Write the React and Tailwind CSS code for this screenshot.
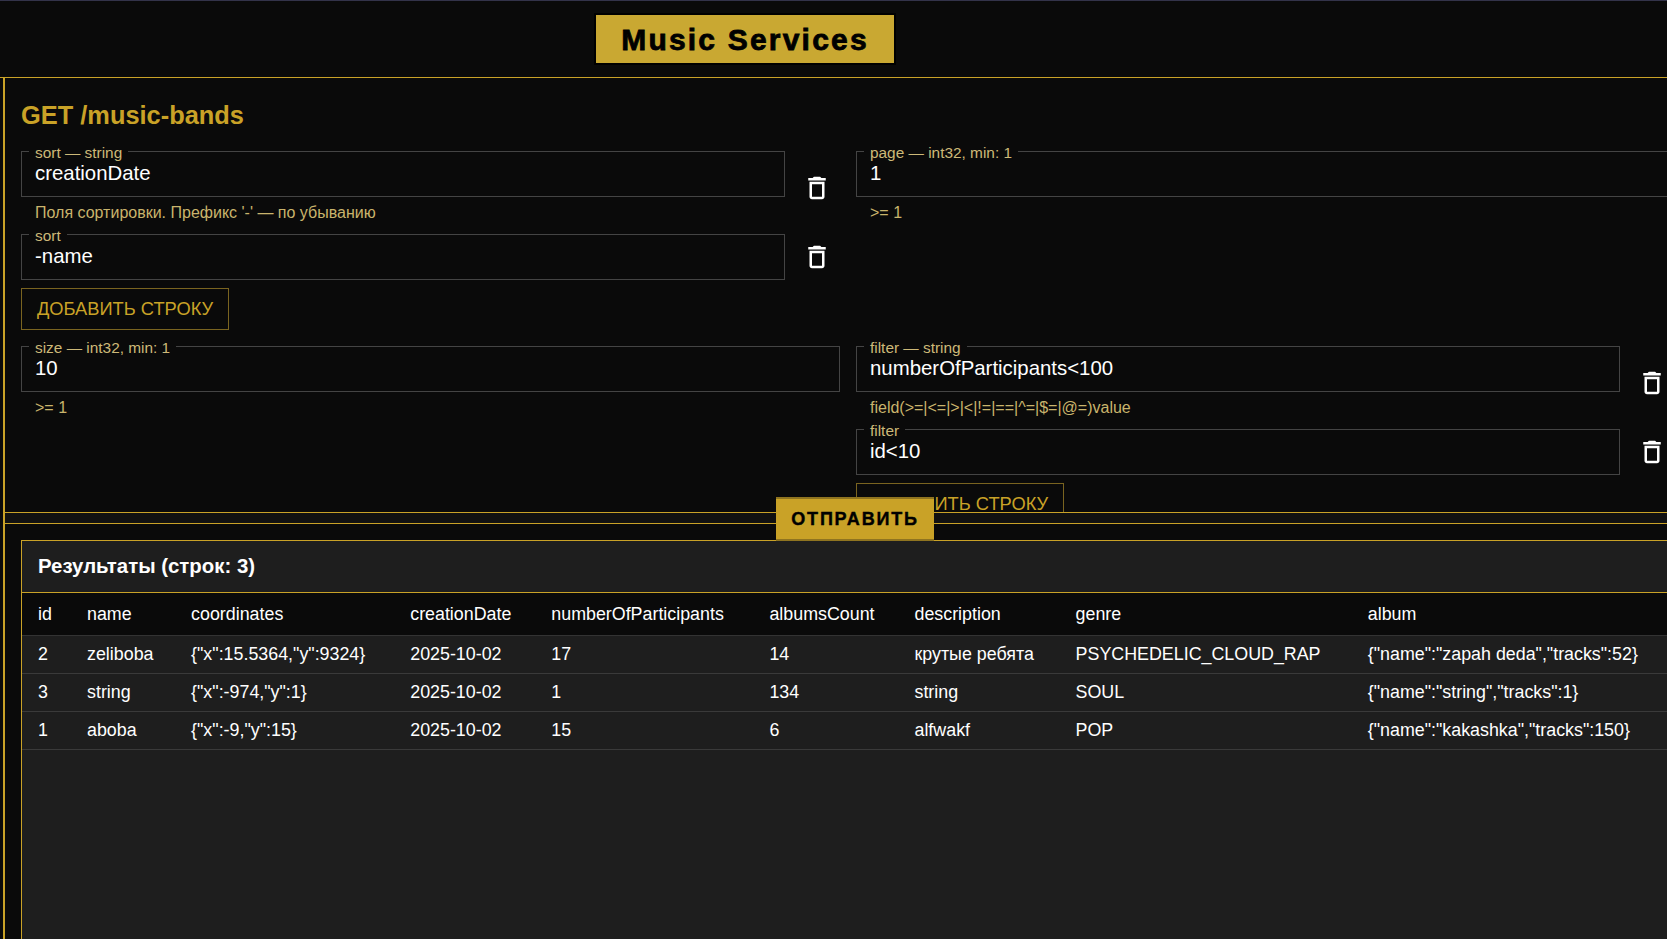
import React from 'react';

const GOLD = 'border-[#c9a227]';

const columns = [
  { key: 'id', width: 'w-[49px]' },
  { key: 'name', width: 'w-[104px]' },
  { key: 'coordinates', width: 'w-[219px]' },
  { key: 'creationDate', width: 'w-[141px]' },
  { key: 'numberOfParticipants', width: 'w-[218px]' },
  { key: 'albumsCount', width: 'w-[145px]' },
  { key: 'description', width: 'w-[161px]' },
  { key: 'genre', width: 'w-[292px]' },
  { key: 'album', width: 'w-[330px]' },
];

const rows = [
  ['2', 'zeliboba', '{"x":15.5364,"y":9324}', '2025-10-02', '17', '14', 'крутые ребята', 'PSYCHEDELIC_CLOUD_RAP', '{"name":"zapah deda","tracks":52}'],
  ['3', 'string', '{"x":-974,"y":1}', '2025-10-02', '1', '134', 'string', 'SOUL', '{"name":"string","tracks":1}'],
  ['1', 'aboba', '{"x":-9,"y":15}', '2025-10-02', '15', '6', 'alfwakf', 'POP', '{"name":"kakashka","tracks":150}'],
];

const TrashIcon = () => (
  <svg viewBox="0 0 24 24" className="w-[30px] h-[30px] fill-white shrink-0">
    <path d="M6 19c0 1.1.9 2 2 2h8c1.1 0 2-.9 2-2V7H6zM8 9h8v10H8zm7.5-5-1-1h-5l-1 1H5v2h14V4z" />
  </svg>
);

// Outlined field with a label sitting in the border notch
const Field = ({ label, value, helper }) => (
  <div className="flex-1 min-w-0">
    <div className="relative h-[46px] border border-[#444444] flex items-center pl-[13px] pb-[2px] text-[20.4px] text-white">
      <span className="absolute left-[7px] -top-[8px] bg-[#0a0a0a] px-[6px] text-[15.4px] leading-[17px] text-[#cdb978]">
        {label}
      </span>
      {value}
    </div>
    {helper && (
      <div className="h-[27px] pl-[14px] flex items-center pt-[5px] text-[16px] text-[#c9b46c]">{helper}</div>
    )}
  </div>
);

const FieldRow = ({ children }) => (
  <div className="flex items-center">
    {children}
    <div className="w-[55px] shrink-0 pl-[17px]">
      <TrashIcon />
    </div>
  </div>
);

const AddRowButton = () => (
  <button className="w-[208px] h-[42px] border border-[#7a6420] text-[18.3px] text-[#c9a227] uppercase">
    Добавить строку
  </button>
);

const App = () => {
  return (
    <div className="h-[939px] w-[1667px] overflow-hidden bg-[#0a0a0a] font-['Liberation_Sans',Arial,sans-serif]">
      {/* Header */}
      <div className="h-[78px] border-t border-t-[#33334a] border-b border-b-[#c9a227] pt-[14px] pl-[596px]">
        <div className="w-[298px] h-[48px] bg-[#c9a832] shadow-[0_0_0_2px_#000] flex items-center justify-center text-[30px] font-bold tracking-[2.2px] text-black [-webkit-text-stroke:0.8px_#000]">
          Music Services
        </div>
      </div>

      <div className={`ml-[3px] h-[861px] border-l-2 ${GOLD}`}>
        {/* Request form */}
        <div className={`h-[435px] overflow-hidden border-b ${GOLD} pl-4 pt-[23px]`}>
          <h2 className="text-[25.4px] leading-[28px] font-bold text-[#c9a227]">GET /music-bands</h2>

          <div className="mt-[22px] grid grid-cols-[819px_819px] gap-x-4 gap-y-[16px]">
            <div>
              <FieldRow>
                <Field label="sort — string" value="creationDate" helper="Поля сортировки. Префикс '-' — по убыванию" />
              </FieldRow>
              <div className="mt-[10px]">
                <FieldRow>
                  <Field label="sort" value="-name" />
                </FieldRow>
              </div>
              <div className="mt-[8px]">
                <AddRowButton />
              </div>
            </div>

            <div>
              <Field label="page — int32, min: 1" value="1" helper=">= 1" />
            </div>

            <div>
              <Field label="size — int32, min: 1" value="10" helper=">= 1" />
            </div>

            <div>
              <FieldRow>
                <Field label="filter — string" value="numberOfParticipants<100" helper="field(>=|<=|>|<|!=|==|^=|$=|@=)value" />
              </FieldRow>
              <div className="mt-[10px]">
                <FieldRow>
                  <Field label="filter" value="id<10" />
                </FieldRow>
              </div>
              <div className="mt-[8px]">
                <AddRowButton />
              </div>
            </div>
          </div>
        </div>

        {/* Submit bar */}
        <div className={`relative h-[11px] bg-[#111111] border-b ${GOLD}`}>
          <button className="absolute left-[771px] -top-[16px] w-[158px] h-[44px] bg-[#c9a227] border-t-2 border-b-2 border-[#8f7420] text-[18px] font-bold tracking-[1.8px] text-black uppercase [-webkit-text-stroke:0.4px_#000]">
            Отправить
          </button>
        </div>

        {/* Results */}
        <div className="ml-4 mt-[16px] h-[400px] bg-[#1e1e1e] border-l border-t border-[#c9a227]">
          <div className={`h-[52px] flex items-center pl-4 border-b ${GOLD} text-[20.4px] font-bold text-white`}>
            Результаты (строк: 3)
          </div>
          <table className="table-fixed w-[1660px] text-[17.85px] text-white text-left">
            <thead className="bg-[#0a0a0a]">
              <tr className="h-[42px] border-b border-[#333333]">
                {columns.map((col) => (
                  <th key={col.key} className={`${col.width} pl-4 pt-[1px] font-normal`}>
                    {col.key}
                  </th>
                ))}
              </tr>
            </thead>
            <tbody>
              {rows.map((row) => (
                <tr key={row[0]} className="h-[38px] border-b border-[#3a3a3a]">
                  {row.map((cell, i) => (
                    <td key={i} className="pl-4 whitespace-nowrap">
                      {cell}
                    </td>
                  ))}
                </tr>
              ))}
            </tbody>
          </table>
        </div>
      </div>
    </div>
  );
};

export default App;
